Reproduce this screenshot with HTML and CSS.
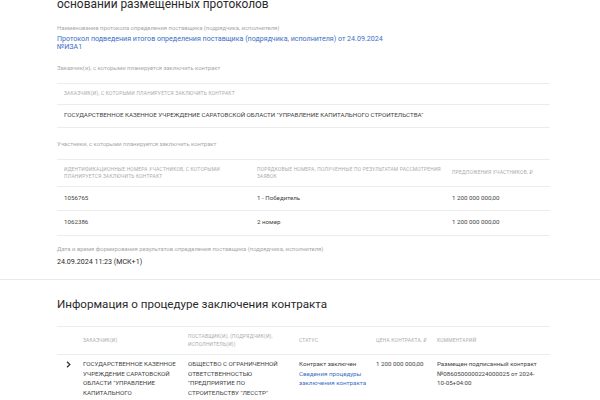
FILE: index.html
```html
<!DOCTYPE html>
<html lang="ru">
<head>
<meta charset="utf-8">
<link rel="stylesheet" href="styles.css">
</head>
<body>
<section class="card card-top">
  <h2 class="title title-top">основании размещенных протоколов</h2>

  <div class="field field-first">
    <div class="label">Наименование протокола определения поставщика (подрядчика, исполнителя)</div>
    <a class="link link-block" href="#">Протокол подведения итогов определения поставщика (подрядчика, исполнителя) от 24.09.2024<br>№ИЗА1</a>
  </div>

  <div class="field">
    <div class="label">Заказчик(и), с которыми планируется заключить контракт</div>
  </div>
  <div class="table t1">
    <div class="row head"><div class="cell">Заказчик(и), с которыми планируется заключить контракт</div></div>
    <div class="row body"><div class="cell upper">Государственное казенное учреждение Саратовской области "Управление капитального строительства"</div></div>
  </div>

  <div class="field">
    <div class="label">Участники, с которыми планируется заключить контракт</div>
  </div>
  <div class="table t2">
    <div class="row head">
      <div class="cell">Идентификационные номера участников, с которыми планируется заключить контракт</div>
      <div class="cell">Порядковые номера, полученные по результатам рассмотрения заявок</div>
      <div class="cell">Предложения участников, ₽</div>
    </div>
    <div class="row body r1">
      <div class="cell">1056765</div>
      <div class="cell">1 - Победитель</div>
      <div class="cell">1 200 000 000,00</div>
    </div>
    <div class="row body r2">
      <div class="cell">1062386</div>
      <div class="cell">2 номер</div>
      <div class="cell">1 200 000 000,00</div>
    </div>
  </div>

  <div class="field field-date">
    <div class="label">Дата и время формирования результатов определения поставщика (подрядчика, исполнителя)</div>
    <div class="value">24.09.2024 11:23 (МСК+1)</div>
  </div>
</section>

<section class="card card-bottom">
  <h2 class="title title-bottom">Информация о процедуре заключения контракта</h2>
  <div class="table t3">
    <div class="row head">
      <div class="cell"></div>
      <div class="cell">Заказчик(и)</div>
      <div class="cell">Поставщик(и), (подрядчик(и), исполнитель(и))</div>
      <div class="cell">Статус</div>
      <div class="cell">Цена контракта, ₽</div>
      <div class="cell">Комментарий</div>
    </div>
    <div class="row body">
      <div class="cell chev">
        <svg width="5" height="7" viewBox="0 0 5 7"><polyline points="1,0.8 3.8,3.5 1,6.2" fill="none" stroke="#333" stroke-width="1.3"/></svg>
      </div>
      <div class="cell upper">Государственное казенное учреждение Саратовской области "Управление капитального строительства"</div>
      <div class="cell upper">Общество с ограниченной ответственностью "Предприятие по строительству "Лесстр"</div>
      <div class="cell">Контракт заключен<br><a class="link" href="#">Сведения процедуры заключения контракта</a></div>
      <div class="cell">1 200 000 000,00</div>
      <div class="cell comment">Размещен подписанный контракт №0860500000224000025 от 2024-10-05+04:00</div>
    </div>
  </div>
</section>
</body>
</html>
```

FILE: styles.css
```css
html, body {
  margin: 0;
  padding: 0;
  background: #ffffff;
  font-family: Roboto, "Noto Sans", sans-serif;
  color: #333333;
  overflow: hidden;
}

.card {
  padding: 0 50px 0 57px;
  background: #ffffff;
}

.card-top {
  height: 282px;
  border-bottom: 1px solid #e9e9e9;
  box-shadow: 0 1px 1px #f3f3f3;
}

.title {
  margin: 0;
  font-weight: 400;
  color: #2a2a2a;
}

.title-top {
  font-size: 11.9px;
  line-height: 14px;
  margin-top: -3px;
}

.title-bottom {
  font-size: 11.6px;
  line-height: 16px;
  padding-top: 15px;
}

.field {
  margin-top: 13px;
}

.field-first {
  margin-top: 14px;
}

.label {
  font-size: 5.9px;
  line-height: 7px;
  color: #a8a8a8;
}

.link {
  color: #3c6fc6;
  text-decoration: none;
}

.link-block {
  display: block;
  margin-top: 3px;
  font-size: 7.1px;
  line-height: 8.4px;
}

.table {
  margin-top: 11px;
  border-top: 1px solid #ececec;
}

.row {
  display: grid;
  border-bottom: 1px solid #ececec;
  align-items: center;
}

.cell {
  font-size: 6.2px;
  line-height: 7.7px;
  color: #444444;
}

.head .cell {
  font-size: 4.9px;
  line-height: 7.2px;
  letter-spacing: 0.2px;
  text-transform: uppercase;
  color: #ababab;
}

.upper {
  text-transform: uppercase;
}

.t1 .row {
  padding: 0 7px;
}

.t1 .head {
  height: 20px;
}

.t1 .body {
  height: 22px;
}

.t2 .row {
  grid-template-columns: 193px 195px 1fr;
  padding: 0 7px;
}

.t2 .head {
  height: 26px;
}

.t2 .r1 {
  height: 22px;
  padding-top: 1px;
}

.t2 .r2 {
  height: 23px;
  padding-top: 1px;
}

.field-date {
  margin-top: 10px;
}

.value {
  margin-top: 4px;
  font-size: 7.1px;
  line-height: 9px;
  color: #2a2a2a;
}

.card-bottom {
  padding-top: 1px;
}

.t3 {
  margin-top: 14px;
}

.t3 .row {
  grid-template-columns: 26px 105px 111px 77px 61px 1fr;
}

.t3 .head {
  height: 27px;
}

.t3 .head .cell {
  padding-right: 4px;
}

.t3 .body {
  align-items: start;
  padding-top: 5px;
}

.t3 .body .cell {
  line-height: 9.6px;
  padding-right: 6px;
}

.t3 .body .comment {
  padding-right: 10px;
}

.chev {
  padding: 1px 0 0 9px;
}

.chev svg {
  display: block;
}
```
